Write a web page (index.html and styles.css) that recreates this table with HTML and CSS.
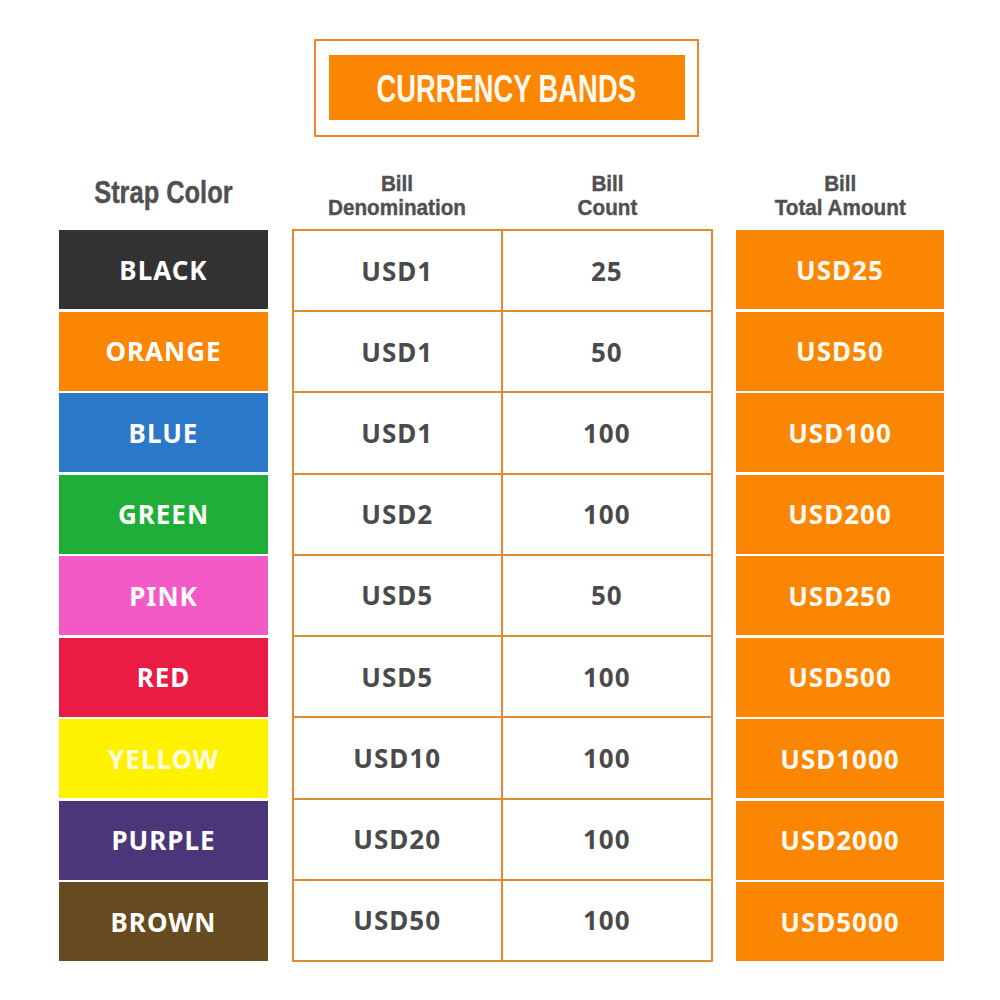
FILE: index.html
```html
<!DOCTYPE html>
<html>
<head>
<meta charset="utf-8">
<link rel="stylesheet" href="styles.css">
</head>
<body>
<div class="page">
  <div class="title-wrap">
    <div class="title-frame">
      <div class="title-box"><h1 class="title">CURRENCY BANDS</h1></div>
    </div>
  </div>
  <div class="board">
    <div class="head head-strap"><span class="squeeze">Strap Color</span></div>
    <div class="head-pair">
      <div class="head"><span class="squeeze">Bill<br>Denomination</span></div>
      <div class="head"><span class="squeeze">Bill<br>Count</span></div>
    </div>
    <div class="head"><span class="squeeze">Bill<br>Total Amount</span></div>

    <div class="straps">
      <div class="strap s-black">BLACK</div>
      <div class="strap s-orange">ORANGE</div>
      <div class="strap s-blue">BLUE</div>
      <div class="strap s-green">GREEN</div>
      <div class="strap s-pink">PINK</div>
      <div class="strap s-red">RED</div>
      <div class="strap s-yellow">YELLOW</div>
      <div class="strap s-purple">PURPLE</div>
      <div class="strap s-brown">BROWN</div>
    </div>

    <div class="grid-table">
      <div class="cell">USD1</div><div class="cell">25</div>
      <div class="cell">USD1</div><div class="cell">50</div>
      <div class="cell">USD1</div><div class="cell">100</div>
      <div class="cell">USD2</div><div class="cell">100</div>
      <div class="cell">USD5</div><div class="cell">50</div>
      <div class="cell">USD5</div><div class="cell">100</div>
      <div class="cell">USD10</div><div class="cell">100</div>
      <div class="cell">USD20</div><div class="cell">100</div>
      <div class="cell">USD50</div><div class="cell">100</div>
    </div>

    <div class="totals">
      <div class="total">USD25</div>
      <div class="total">USD50</div>
      <div class="total">USD100</div>
      <div class="total">USD200</div>
      <div class="total">USD250</div>
      <div class="total">USD500</div>
      <div class="total">USD1000</div>
      <div class="total">USD2000</div>
      <div class="total">USD5000</div>
    </div>
  </div>
</div>
</body>
</html>
```

FILE: styles.css
```css
html, body {
  margin: 0;
  padding: 0;
  background: #ffffff;
}

.page {
  width: 1000px;
  height: 1000px;
  font-family: "Noto Sans", "Open Sans", sans-serif;
}

.title-wrap {
  display: flex;
  justify-content: center;
  padding-top: 39px;
  padding-left: 13px;
}

.title-frame {
  width: 385px;
  height: 98px;
  border: 2.5px solid #f0882a;
  padding: 13.5px 12.5px 14.5px 12.5px;
  box-sizing: border-box;
}

.title-box {
  background: #fb8604;
  height: 65px;
  display: flex;
  align-items: center;
  justify-content: center;
}

.title {
  margin: 0;
  font-family: "Liberation Sans", Arial, sans-serif;
  font-weight: 700;
  font-size: 38px;
  color: #fff8ec;
  line-height: 1;
  padding-top: 4px;
  white-space: nowrap;
  transform: scaleX(0.72);
}

.board {
  display: grid;
  grid-template-columns: 209px 421px 208px;
  grid-template-rows: 92px 733px;
  column-gap: 23.5px;
  margin-left: 59px;
}

.head-pair {
  display: grid;
  grid-template-columns: 1fr 1fr;
}

.head {
  font-family: "Liberation Sans", Arial, sans-serif;
  font-weight: 700;
  font-size: 22.5px;
  line-height: 24px;
  color: #505050;
  text-align: center;
  padding-top: 35px;
  display: flex;
  justify-content: center;
  align-items: flex-start;
}

.squeeze {
  display: inline-block;
  transform: scaleX(0.92);
  white-space: nowrap;
  -webkit-text-stroke: 0.4px #505050;
}

.head-strap {
  font-size: 31px;
  line-height: 34px;
  padding-top: 39px;
}

.head-strap .squeeze {
  transform: scaleX(0.82);
}

.straps, .totals {
  display: grid;
  grid-template-rows: repeat(9, 79px);
  row-gap: 2.5px;
  padding-top: 1px;
}

.strap, .total {
  display: flex;
  align-items: center;
  justify-content: center;
  font-weight: 700;
  font-size: 26px;
  letter-spacing: 1px;
  color: #ffffff;
}

.total {
  background: #fb8604;
  color: #fff9ef;
}

.s-black { background: #323232; }
.s-orange { background: #fb8604; }
.s-blue { background: #2b77c8; }
.s-green { background: #1fae3a; }
.s-pink { background: #f45ac5; }
.s-red { background: #ea1c46; }
.s-yellow { background: #fff200; color: #fffbe0; }
.s-purple { background: #4b3679; }
.s-brown { background: #664a20; }

.grid-table {
  display: grid;
  grid-template-columns: 1fr 1fr;
  grid-template-rows: repeat(9, 1fr);
  border-top: 2px solid #e08b30;
  border-left: 2px solid #e08b30;
  box-sizing: border-box;
  height: 733px;
}

.cell {
  border-right: 2px solid #e08b30;
  border-bottom: 2px solid #e08b30;
  display: flex;
  align-items: center;
  justify-content: center;
  font-weight: 700;
  font-size: 26px;
  letter-spacing: 1px;
  color: #4a4a4a;
}
```
